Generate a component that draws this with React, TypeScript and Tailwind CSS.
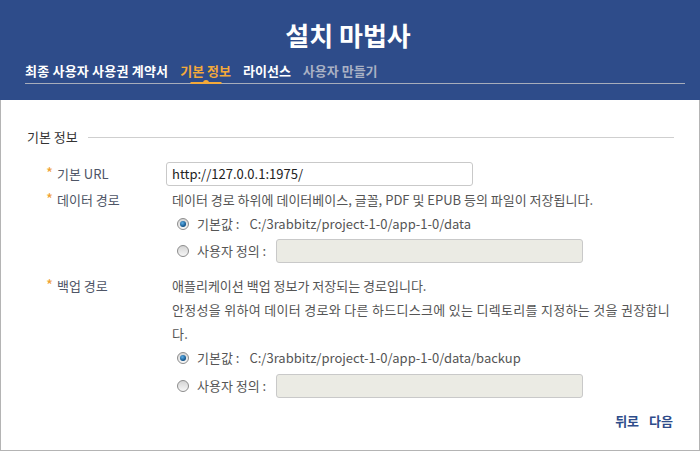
import React from "react";

const FONT = { fontFamily: '"Noto Sans CJK KR", "Noto Sans", sans-serif' };

function Radio({ checked }: { checked?: boolean }) {
  return (
    <span className="relative inline-flex h-[12px] w-[12px] shrink-0 items-center justify-center rounded-full border border-[#8c8c8c] bg-linear-to-b from-[#d4d4d4] to-[#f7f7f7]">
      {checked && (
        <span className="h-[6px] w-[6px] rounded-full bg-[radial-gradient(circle_at_40%_35%,#5fb0e8,#0d4f86_70%)]" />
      )}
    </span>
  );
}

function Label({ text }: { text: string }) {
  return (
    <div className="flex items-start">
      <span className="mr-[4px] mt-[3px] text-[15px] leading-[16px] text-[#f0a030]">*</span>
      <span className="text-[13px] leading-[24px] text-[#4e5566]">{text}</span>
    </div>
  );
}

export default function App() {
  return (
    <div className="h-[451px] w-[700px] bg-white" style={FONT}>
      <div className="h-[100px] bg-[#2e4c8a] pt-[17px]">
        <div className="pr-[4px] text-center text-[26px] font-bold leading-[36px] text-white">설치 마법사</div>
        <div className="ml-[25px] mr-[15px] mt-[9px] flex h-[22px] items-stretch gap-[12px] border-b border-[#a7adbb] text-[13px] font-bold leading-[18px]">
          <span className="tracking-[0.2px] text-white">최종 사용자 사용권 계약서</span>
          <span className="relative text-[#f4a93a]">
            기본 정보
            <span className="absolute bottom-[-1px] left-1/2 h-[2px] w-[31px] -translate-x-1/2 bg-[#f4a93a]" />
            <span className="absolute bottom-[0px] left-1/2 h-[3px] w-[6px] -translate-x-1/2 rounded-t-full bg-[#f4a93a]" />
          </span>
          <span className="text-white">라이선스</span>
          <span className="text-[#a9b1c4]">사용자 만들기</span>
        </div>
      </div>

      <div className="h-[351px] border-x border-b border-[#b4b4b4] pl-[26px] pr-[25px] pt-[27px] text-[13px]">
        <div className="flex h-[20px] items-center">
          <span className="mr-[10px] leading-[20px] text-[#333]">기본 정보</span>
          <div className="h-px flex-1 bg-[#cfcfcf]" />
        </div>

        <div className="mt-[15px] grid grid-cols-[120px_1fr] pl-[19px]">
          <Label text="기본 URL" />
          <div className="flex h-[24px] w-[307px] items-center rounded-[3px] border border-[#c9c9c9] bg-white pl-[5px] leading-[22px] text-[#222]">
            http://127.0.0.1:1975/
          </div>
        </div>

        <div className="mt-[2px] grid grid-cols-[120px_1fr] pl-[19px]">
          <Label text="데이터 경로" />
          <div>
            <div className="pl-[6px] leading-[24px] text-[#555]">
              데이터 경로 하위에 데이터베이스, 글꼴, PDF 및 EPUB 등의 파일이 저장됩니다.
            </div>
            <div className="flex h-[24px] items-center pl-[11px] text-[#555]">
              <Radio checked />
              <span className="ml-[8px]">기본값 :</span>
              <span className="ml-[10px]">C:/3rabbitz/project-1-0/app-1-0/data</span>
            </div>
            <div className="mt-[3px] flex h-[24px] items-center pl-[11px] text-[#555]">
              <Radio />
              <span className="ml-[8px]">사용자 정의 :</span>
              <div className="ml-[10px] h-[24px] w-[307px] rounded-[3px] border border-[#c9c9c9] bg-[#ebebe4]" />
            </div>
          </div>
        </div>

        <div className="mt-[11px] grid grid-cols-[120px_1fr] pl-[19px]">
          <Label text="백업 경로" />
          <div>
            <div className="pl-[6px] leading-[24px] text-[#555]">
              애플리케이션 백업 정보가 저장되는 경로입니다.
            </div>
            <div className="pl-[6px] leading-[24px] tracking-[0.3px] text-[#555]">
              안정성을 위하여 데이터 경로와 다른 하드디스크에 있는 디렉토리를 지정하는 것을 권장합니
              <br />
              다.
            </div>
            <div className="flex h-[24px] items-center pl-[11px] text-[#555]">
              <Radio checked />
              <span className="ml-[8px]">기본값 :</span>
              <span className="ml-[10px]">C:/3rabbitz/project-1-0/app-1-0/data/backup</span>
            </div>
            <div className="mt-[4px] flex h-[24px] items-center pl-[11px] text-[#555]">
              <Radio />
              <span className="ml-[8px]">사용자 정의 :</span>
              <div className="ml-[10px] h-[24px] w-[307px] rounded-[3px] border border-[#c9c9c9] bg-[#ebebe4]" />
            </div>
          </div>
        </div>

        <div className="mt-[13px] flex justify-end gap-[10px] pr-[1px] text-[13px] font-bold leading-[20px] text-[#2e4c8a]">
          <span>뒤로</span>
          <span>다음</span>
        </div>
      </div>
    </div>
  );
}
